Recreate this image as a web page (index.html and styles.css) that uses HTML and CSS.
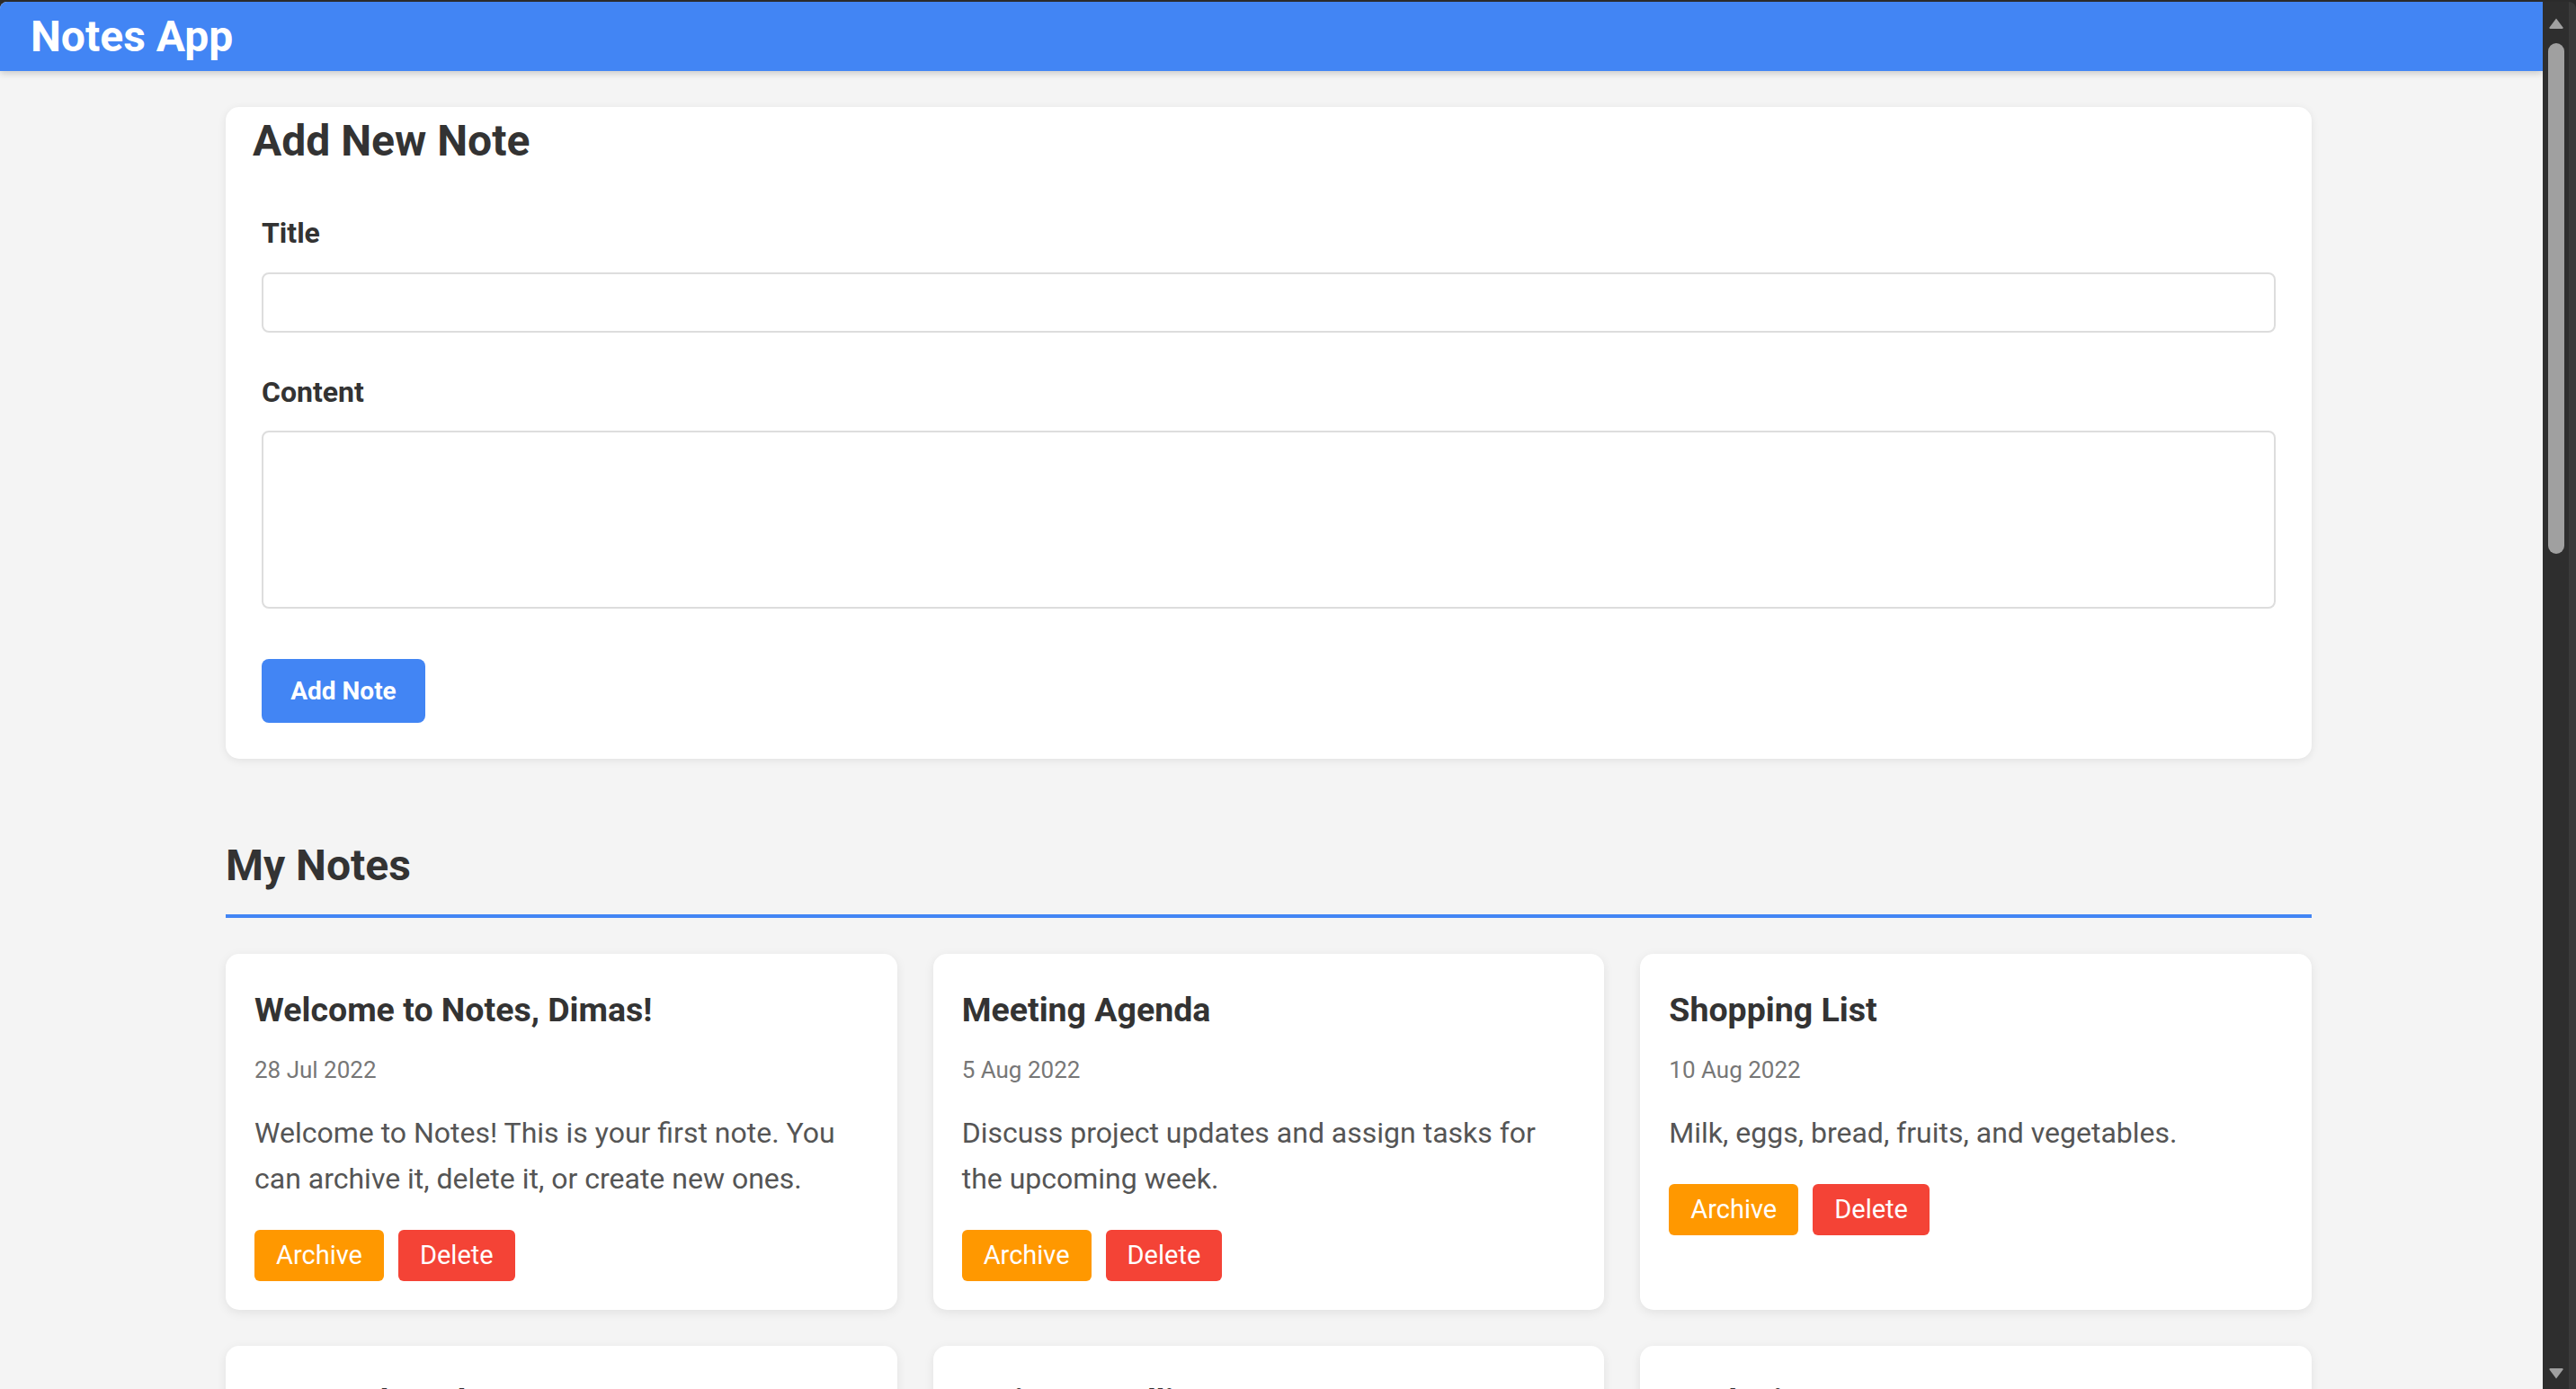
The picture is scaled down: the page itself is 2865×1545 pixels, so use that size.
FILE: index.html
```html
<!DOCTYPE html>
<html lang="en">
<head>
<meta charset="utf-8">
<title>Notes App</title>
<link rel="stylesheet" href="styles.css">
</head>
<body>
<div class="window">
  <div class="page">
    <header class="app-header">
      <h1 class="app-title">Notes App</h1>
    </header>
    <main class="container">
      <section class="form-card">
        <h2 class="form-heading">Add New Note</h2>
        <form class="note-form">
          <label class="field-label" for="title">Title</label>
          <input class="field-input" id="title" type="text">
          <label class="field-label" for="content">Content</label>
          <textarea class="field-textarea" id="content"></textarea>
          <button type="button" class="btn-add">Add Note</button>
        </form>
      </section>

      <h2 class="section-heading">My Notes</h2>

      <div class="notes-grid">
        <article class="note-card">
          <h3 class="note-title">Welcome to Notes, Dimas!</h3>
          <p class="note-date">28 Jul 2022</p>
          <p class="note-body">Welcome to Notes! This is your first note. You can archive it, delete it, or create new ones.</p>
          <div class="note-actions">
            <button type="button" class="btn btn-archive">Archive</button>
            <button type="button" class="btn btn-delete">Delete</button>
          </div>
        </article>
        <article class="note-card">
          <h3 class="note-title">Meeting Agenda</h3>
          <p class="note-date">5 Aug 2022</p>
          <p class="note-body">Discuss project updates and assign tasks for the upcoming week.</p>
          <div class="note-actions">
            <button type="button" class="btn btn-archive">Archive</button>
            <button type="button" class="btn btn-delete">Delete</button>
          </div>
        </article>
        <article class="note-card">
          <h3 class="note-title">Shopping List</h3>
          <p class="note-date">10 Aug 2022</p>
          <p class="note-body">Milk, eggs, bread, fruits, and vegetables.</p>
          <div class="note-actions">
            <button type="button" class="btn btn-archive">Archive</button>
            <button type="button" class="btn btn-delete">Delete</button>
          </div>
        </article>
        <article class="note-card">
          <h3 class="note-title">Personal Goals</h3>
          <p class="note-date">12 Aug 2022</p>
          <p class="note-body">Read more books, exercise regularly, and learn something new every week.</p>
          <div class="note-actions">
            <button type="button" class="btn btn-archive">Archive</button>
            <button type="button" class="btn btn-delete">Delete</button>
          </div>
        </article>
        <article class="note-card">
          <h3 class="note-title">Project Deadlines</h3>
          <p class="note-date">15 Aug 2022</p>
          <p class="note-body">Finish the report draft and send it to the team for review.</p>
          <div class="note-actions">
            <button type="button" class="btn btn-archive">Archive</button>
            <button type="button" class="btn btn-delete">Delete</button>
          </div>
        </article>
        <article class="note-card">
          <h3 class="note-title">Book List</h3>
          <p class="note-date">20 Aug 2022</p>
          <p class="note-body">Books to read this month.</p>
          <div class="note-actions">
            <button type="button" class="btn btn-archive">Archive</button>
            <button type="button" class="btn btn-delete">Delete</button>
          </div>
        </article>
      </div>
    </main>
  </div>
  <div class="scrollbar" aria-hidden="true">
    <svg class="sb-arrow sb-up" width="18" height="14" viewBox="0 0 18 14"><path d="M9 1.5 L16.5 11.5 Q17 13 15.5 13 L2.5 13 Q1 13 1.5 11.5 Z" fill="#a0a0a0"/></svg>
    <div class="sb-thumb"></div>
    <div class="sb-track"></div>
    <svg class="sb-arrow sb-down" width="18" height="14" viewBox="0 0 18 14"><path d="M9 12.5 L16.5 2.5 Q17 1 15.5 1 L2.5 1 Q1 1 1.5 2.5 Z" fill="#a0a0a0"/></svg>
  </div>
</div>
</body>
</html>
```

FILE: styles.css
```css
html, body {
  margin: 0;
  height: 100%;
  overflow: hidden;
}

body {
  background: #2b2b2b;
  padding-top: 2px;
  box-sizing: border-box;
  font-family: Roboto, "Noto Sans", "Liberation Sans", sans-serif;
  color: #333;
}

.window {
  display: flex;
  height: 100%;
  border-radius: 8px 8px 0 0;
  overflow: hidden;
}

.page {
  flex: 1;
  min-width: 0;
  background: #f4f4f4;
  overflow: hidden;
  padding-right: 6px;
}

.app-header {
  position: relative;
  z-index: 1;
  background: #4285f4;
  padding: 11px 34px;
  box-shadow: 0 2px 8px rgba(0, 0, 0, 0.2);
  margin-right: -6px;
}

.app-title {
  margin: 0;
  color: #fff;
  font-size: 48px;
  font-weight: 700;
  line-height: 55px;
}

.container {
  max-width: 2320px;
  margin: 40px auto 0;
}

.form-card {
  background: #fff;
  border-radius: 15px;
  padding: 10px 30px 40px;
  box-shadow: 0 2px 10px rgba(0, 0, 0, 0.08);
}

.form-heading {
  margin: 0;
  font-size: 48px;
  font-weight: 700;
  color: #333;
  line-height: 56px;
}

.note-form {
  display: flex;
  flex-direction: column;
  align-items: stretch;
  padding: 0 10px;
  margin-top: 56px;
}

.field-label {
  font-size: 32px;
  font-weight: 700;
  color: #333;
  line-height: 37px;
  margin-bottom: 24.5px;
}

.field-input {
  height: 67px;
  box-sizing: border-box;
  border: 2px solid #ddd;
  border-radius: 8px;
  margin-bottom: 48px;
  font: inherit;
  font-size: 28px;
  padding: 0 16px;
  background: #fff;
}

.field-textarea {
  height: 198px;
  box-sizing: border-box;
  border: 2px solid #ddd;
  border-radius: 8px;
  margin-bottom: 56px;
  font: inherit;
  font-size: 28px;
  padding: 16px;
  resize: none;
  background: #fff;
}

.btn-add {
  align-self: flex-start;
  width: 182px;
  height: 71px;
  border: 0;
  border-radius: 8px;
  background: #4285f4;
  color: #fff;
  font-family: inherit;
  font-size: 28px;
  font-weight: 700;
  padding: 0;
}

.section-heading {
  margin: 91px 0 0;
  font-size: 48px;
  font-weight: 700;
  color: #333;
  line-height: 56px;
  padding-bottom: 26px;
  border-bottom: 4px solid #4285f4;
}

.notes-grid {
  display: grid;
  grid-template-columns: repeat(3, 1fr);
  gap: 40px;
  margin-top: 40px;
}

.note-card {
  background: #fff;
  border-radius: 15px;
  padding: 32px;
  box-shadow: 0 3px 12px rgba(0, 0, 0, 0.08);
}

.note-title {
  margin: 8px 0 0;
  font-size: 37.5px;
  font-weight: 700;
  line-height: 44px;
  color: #333;
}

.note-date {
  margin: 30px 0 0;
  font-size: 26px;
  line-height: 30px;
  color: #777;
}

.note-body {
  margin: 29.5px 0 0;
  font-size: 32px;
  line-height: 51.2px;
  color: #555;
}

.note-actions {
  display: flex;
  gap: 16px;
  margin-top: 31px;
}

.btn {
  border: 0;
  border-radius: 6px;
  padding: 11px 24px 12px;
  font-family: inherit;
  font-size: 29px;
  line-height: 34px;
  color: #fff;
}

.btn-archive {
  background: #ff9800;
}

.btn-delete {
  background: #f44336;
}

.scrollbar {
  width: 29px;
  background: #2e2e2e;
  border-right: 8px solid #3a3a3a;
  display: flex;
  flex-direction: column;
  align-items: center;
  padding-top: 17px;
  padding-bottom: 10px;
  box-sizing: content-box;
}

.sb-arrow {
  flex: none;
  display: block;
}

.sb-thumb {
  flex: none;
  width: 18px;
  height: 568px;
  margin-top: 15px;
  border-radius: 9px;
  background: #a0a0a0;
}

.sb-track {
  flex: 1;
}
```
